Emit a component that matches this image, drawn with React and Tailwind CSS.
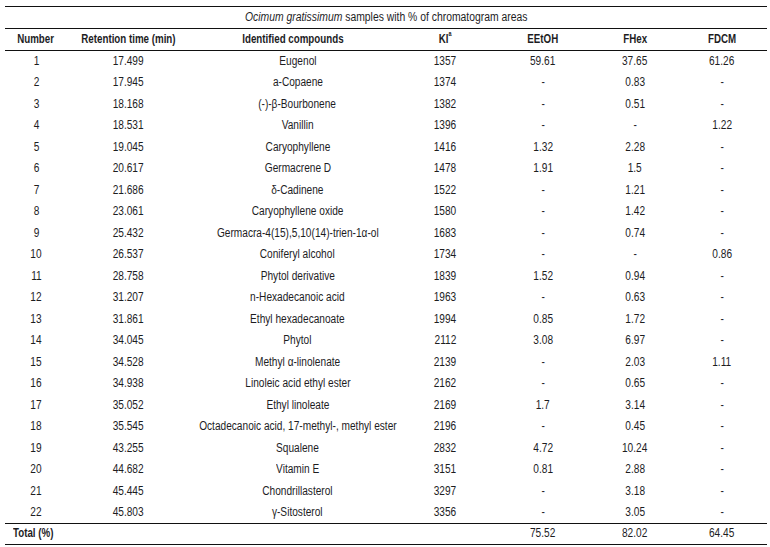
import React from "react";

const rows = [
  ["1", "17.499", "Eugenol", "1357", "59.61", "37.65", "61.26"],
  ["2", "17.945", "a-Copaene", "1374", "-", "0.83", "-"],
  ["3", "18.168", "(-)-β-Bourbonene", "1382", "-", "0.51", "-"],
  ["4", "18.531", "Vanillin", "1396", "-", "-", "1.22"],
  ["5", "19.045", "Caryophyllene", "1416", "1.32", "2.28", "-"],
  ["6", "20.617", "Germacrene D", "1478", "1.91", "1.5", "-"],
  ["7", "21.686", "δ-Cadinene", "1522", "-", "1.21", "-"],
  ["8", "23.061", "Caryophyllene oxide", "1580", "-", "1.42", "-"],
  ["9", "25.432", "Germacra-4(15),5,10(14)-trien-1α-ol", "1683", "-", "0.74", "-"],
  ["10", "26.537", "Coniferyl alcohol", "1734", "-", "-", "0.86"],
  ["11", "28.758", "Phytol derivative", "1839", "1.52", "0.94", "-"],
  ["12", "31.207", "n-Hexadecanoic acid", "1963", "-", "0.63", "-"],
  ["13", "31.861", "Ethyl hexadecanoate", "1994", "0.85", "1.72", "-"],
  ["14", "34.045", "Phytol", "2112", "3.08", "6.97", "-"],
  ["15", "34.528", "Methyl α-linolenate", "2139", "-", "2.03", "1.11"],
  ["16", "34.938", "Linoleic acid ethyl ester", "2162", "-", "0.65", "-"],
  ["17", "35.052", "Ethyl linoleate", "2169", "1.7", "3.14", "-"],
  ["18", "35.545", "Octadecanoic acid, 17-methyl-, methyl ester", "2196", "-", "0.45", "-"],
  ["19", "43.255", "Squalene", "2832", "4.72", "10.24", "-"],
  ["20", "44.682", "Vitamin E", "3151", "0.81", "2.88", "-"],
  ["21", "45.445", "Chondrillasterol", "3297", "-", "3.18", "-"],
  ["22", "45.803", "γ-Sitosterol", "3356", "-", "3.05", "-"],
];

// narrow face: Arial-width font squeezed horizontally
function N({ children, left = false, bold = false }) {
  return (
    <span
      className={`inline-block whitespace-nowrap ${bold ? "scale-x-[0.78]" : "scale-x-[0.81]"} ${
        left ? "origin-left" : "origin-center"
      }`}
    >
      {children}
    </span>
  );
}

const headers = ["Number", "Retention time (min)", "Identified compounds"];

export default function App() {
  return (
    <div className="w-[770px] h-[547px] bg-white pt-[6px] pl-[5px] font-['Liberation_Sans',Arial,sans-serif] text-[12.5px] text-[#1d1d1f]">
      <table className="w-[762px] table-fixed border-collapse">
        <colgroup>
          <col className="w-[62px]" />
          <col className="w-[122px]" />
          <col className="w-[208px]" />
          <col className="w-[96px]" />
          <col className="w-[100px]" />
          <col className="w-[84px]" />
          <col className="w-[90px]" />
        </colgroup>
        <thead>
          <tr className="h-[22px] border-t-[1.5px] border-b-[1.5px] border-[#111]">
            <th colSpan={7} className="font-normal text-center p-0 leading-none">
              <span className="inline-block whitespace-nowrap scale-x-[0.83]">
                <i>Ocimum gratissimum</i> samples with % of chromatogram areas
              </span>
            </th>
          </tr>
          <tr className="h-[21.5px] border-b-[1.5px] border-[#111]">
            {headers.map((h) => (
              <th key={h} className="font-bold p-0 leading-none whitespace-nowrap">
                <N bold>{h}</N>
              </th>
            ))}
            <th className="font-bold p-0 leading-none">
              <N bold>
                KI<sup className="text-[7px] align-[4px]">a</sup>
              </N>
            </th>
            <th className="font-bold p-0 leading-none">
              <N bold>EEtOH</N>
            </th>
            <th className="font-bold p-0 leading-none">
              <N bold>FHex</N>
            </th>
            <th className="font-bold p-0 leading-none">
              <N bold>FDCM</N>
            </th>
          </tr>
        </thead>
        <tbody>
          {rows.map((r) => (
            <tr key={r[0]} className="h-[21.5px]">
              {r.map((c, i) => (
                <td key={i} className={`p-0 leading-none ${i === 2 ? "pl-[9px]" : ""}`}>
                  <div className="flex justify-center">
                    <N>{c}</N>
                  </div>
                </td>
              ))}
            </tr>
          ))}
          <tr className="h-[21px] border-t-[1.5px] border-b-[1.5px] border-[#111]">
            <td colSpan={2} className="font-bold text-left pl-[8px] p-0 leading-none">
              <N left bold>Total (%)</N>
            </td>
            <td className="p-0" />
            <td className="p-0" />
            <td className="text-center p-0 leading-none">
              <N>75.52</N>
            </td>
            <td className="text-center p-0 leading-none">
              <N>82.02</N>
            </td>
            <td className="text-center p-0 leading-none">
              <N>64.45</N>
            </td>
          </tr>
        </tbody>
      </table>
    </div>
  );
}
